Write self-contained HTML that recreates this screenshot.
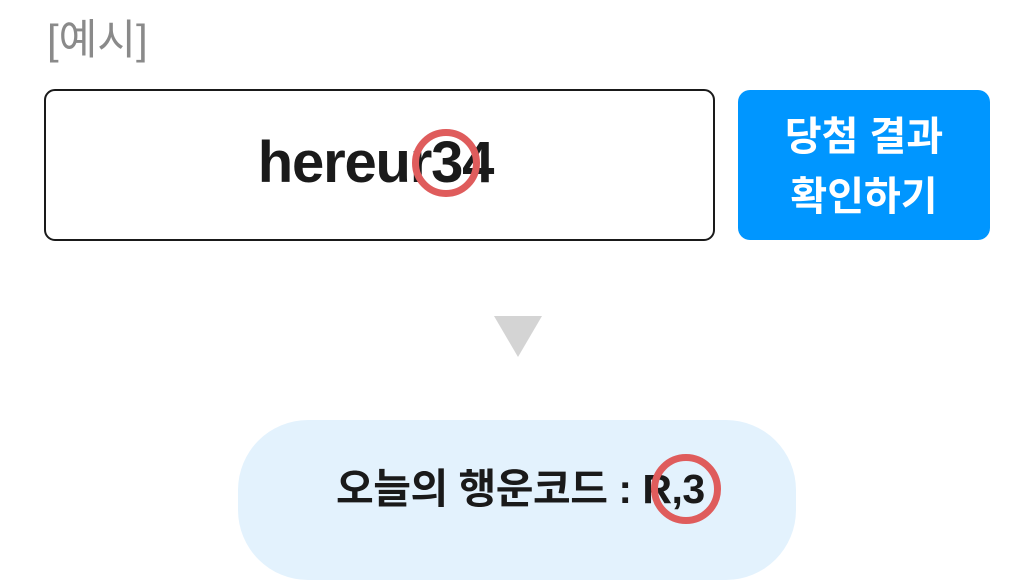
<!DOCTYPE html>
<html><head><meta charset="utf-8"><style>
body{margin:0;width:1035px;height:558px;background:#fff;position:relative;overflow:hidden;font-family:"Liberation Sans","Noto Sans CJK KR",sans-serif}
.a{position:absolute}
</style></head><body>
<div class="a" style="left:47px;top:14px;font-size:42px;color:#8a8a8a;line-height:52px">[예시]</div>
<div class="a" style="left:44px;top:89px;width:667px;height:148px;border:2px solid #1a1a1a;border-radius:11px"></div>
<div class="a" style="left:40px;top:128px;width:671px;text-align:center;font-size:58px;font-weight:bold;color:#1a1a1a;letter-spacing:-1.2px;line-height:70px">hereur34</div>
<div class="a" style="left:412px;top:129px;border:7px solid #df5c5c;border-radius:50%;box-sizing:border-box;width:68px;height:68px"></div>
<div class="a" style="left:738px;top:90px;width:252px;height:150px;background:#0096ff;border-radius:12px;color:#fff;font-size:40px;font-weight:bold;text-align:center;line-height:60px;padding-top:17px;box-sizing:border-box">당첨 결과<br>확인하기</div>
<svg class="a" style="left:494px;top:316px" width="48" height="41"><polygon points="0,0 48,0 24,41" fill="#d4d4d4"/></svg>
<div class="a" style="left:238px;top:420px;width:558px;height:160px;background:#e3f2fd;border-radius:70px"></div>
<div class="a" style="left:336px;top:462px;font-size:41px;font-weight:bold;color:#1a1a1a;line-height:54px;letter-spacing:-0.5px;white-space:nowrap">오늘의 행운코드 : R,3</div>
<div class="a" style="left:651px;top:454px;width:70px;height:70px;border:7px solid #df5c5c;border-radius:50%;box-sizing:border-box"></div>
</body></html>
